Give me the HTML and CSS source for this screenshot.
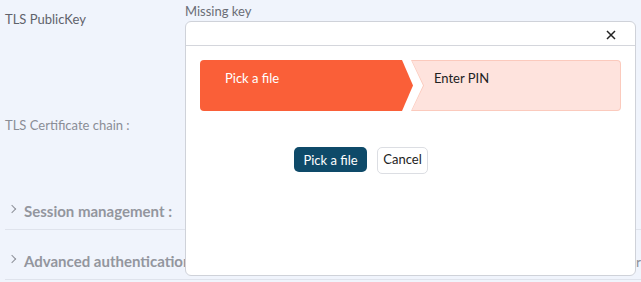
FILE: index.html
```html
<!DOCTYPE html>
<html>
<head>
<meta charset="utf-8">
<link rel="stylesheet" href="styles.css">
</head>
<body>
<div class="page">
  <div class="row row-key">
    <div class="label">TLS PublicKey</div>
    <div class="value">Missing key</div>
  </div>
  <div class="row row-chain">
    <div class="label">TLS Certificate chain :</div>
  </div>
  <div class="section section-session">
    <span class="chev"></span><span class="section-title">Session management :</span>
  </div>
  <div class="section section-adv">
    <span class="chev"></span><span class="section-title">Advanced authentication</span>
    <span class="section-extra">Authorizer</span>
  </div>
</div>

<div class="modal">
  <div class="modal-header">
    <svg class="close" width="10" height="10" viewBox="0 0 10 10"><path d="M1 1L9 9M9 1L1 9" stroke="#222" stroke-width="1.5" fill="none"/></svg>
  </div>
  <div class="modal-body">
    <div class="steps">
      <div class="step step-active"><span>Pick a file</span></div>
      <div class="step step-next"><div class="step-inner"><span>Enter PIN</span></div></div>
    </div>
    <div class="actions">
      <button class="btn btn-primary">Pick a file</button>
      <button class="btn btn-cancel">Cancel</button>
    </div>
  </div>
</div>
</body>
</html>
```

FILE: styles.css
```css
html, body {
  margin: 0;
  padding: 0;
}
body {
  width: 641px;
  height: 282px;
  overflow: hidden;
  background: #f0f4fc;
  font-family: "Lato", "Open Sans", sans-serif;
  font-size: 13px;
  position: relative;
}
.page {
  padding: 0 0 0 5px;
}
.row {
  display: flex;
}
.label {
  width: 180px;
  color: #5f626b;
}
.value {
  color: #6a6d76;
}
.row-key {
  padding-top: 3px;
  height: 104px;
}
.row-key .label {
  padding-top: 8px;
}
.row-chain {
  padding-top: 10px;
  height: 74px;
}
.row-chain .label {
  color: #8a8d96;
}
.section {
  display: flex;
  align-items: flex-end;
  height: 50px;
  padding-bottom: 9px;
  border-bottom: 1px solid #dfe3ec;
  font-size: 15px;
  font-weight: bold;
  color: #93969e;
  box-sizing: border-box;
}
.section-session {
  height: 39px;
}
.chev {
  width: 5px;
  height: 5px;
  border-right: 1px solid #8f929a;
  border-top: 1px solid #8f929a;
  transform: rotate(45deg);
  margin: 0 9px 8px 4px;
}
.section-extra {
  margin-left: auto;
  font-weight: normal;
  font-size: 14px;
  color: #8f929a;
}
.modal {
  position: absolute;
  left: 185px;
  top: 21px;
  width: 451px;
  height: 255px;
  box-sizing: border-box;
  background: #fff;
  border: 1px solid #cfd2d9;
  border-radius: 6px;
}
.modal-header {
  height: 23px;
  border-bottom: 1px solid #d4d6dc;
  display: flex;
  justify-content: flex-end;
  align-items: center;
  padding-right: 19px;
}
.close {
  display: block;
  margin-top: 2px;
}
.modal-body {
  padding: 14px 14px 0 14px;
}
.steps {
  display: flex;
  height: 51px;
}
.step {
  display: flex;
  align-items: flex-start;
  box-sizing: border-box;
}
.step span {
  padding-top: 10px;
}
.step-active {
  width: 213px;
  background: #fa5f38;
  color: #fff;
  padding-left: 25px;
  border-radius: 4px 0 0 4px;
  clip-path: polygon(0 0, calc(100% - 11px) 0, 100% 50%, calc(100% - 11px) 100%, 0 100%);
}
.step-next {
  flex: 1;
  margin-left: -2px;
  background: #fbcabd;
  border-radius: 0 4px 4px 0;
  clip-path: polygon(0 0, 100% 0, 100% 100%, 0 100%, 12px 50%);
  padding: 1px 1px 1px 0;
}
.step-inner {
  flex: 1;
  height: 100%;
  background: #fee3dd;
  border-radius: 0 3px 3px 0;
  clip-path: polygon(1px 0, 100% 0, 100% 100%, 1px 100%, 13px 50%);
  color: #222;
  padding-left: 23px;
  display: flex;
  align-items: flex-start;
}
.step-inner span {
  padding-top: 9px;
}
.actions {
  display: flex;
  align-items: flex-start;
  gap: 10px;
  padding: 36px 0 0 94px;
}
.btn {
  font-family: "Lato", "Open Sans", sans-serif;
  font-size: 13px;
  border-radius: 5px;
  cursor: pointer;
  margin: 0;
}
.btn-primary {
  background: #0e4a69;
  color: #fff;
  border: none;
  height: 25px;
  width: 73px;
  padding: 0;
}
.btn-cancel {
  background: #fff;
  color: #222;
  border: 1px solid #dcdee3;
  height: 27px;
  width: 51px;
  padding: 0 0 4px 0;
}
```
